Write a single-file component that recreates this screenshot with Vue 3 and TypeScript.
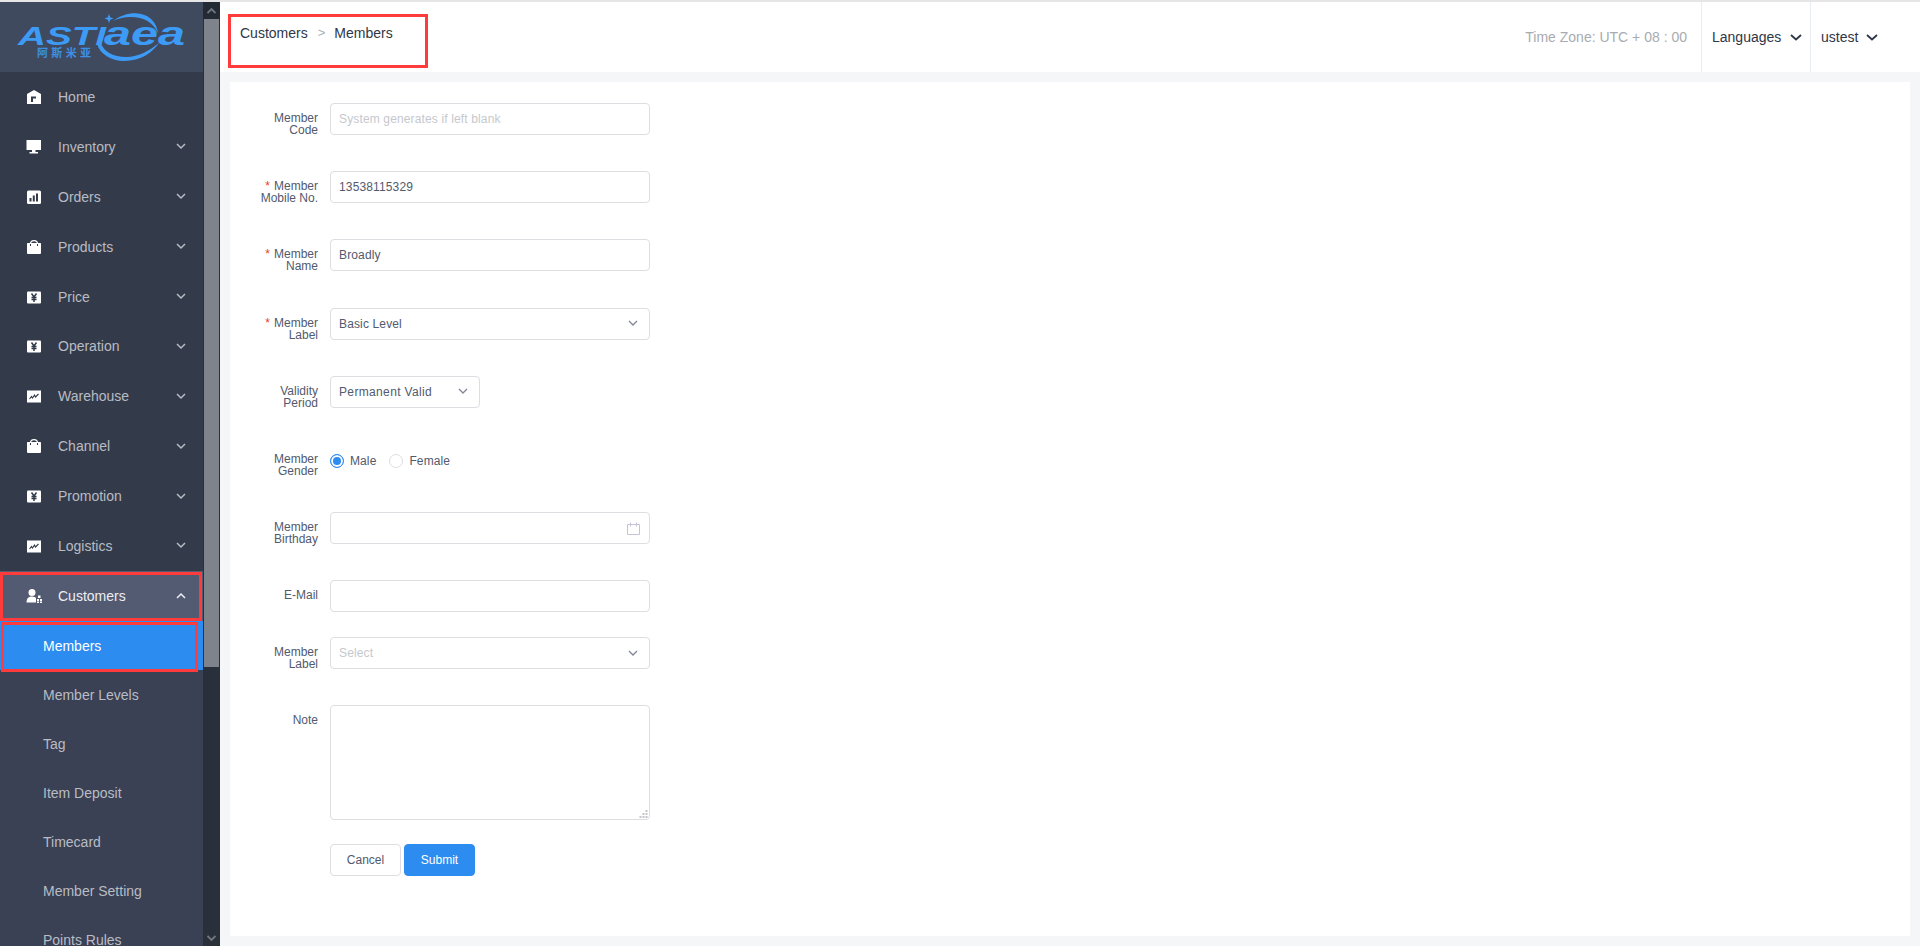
<script setup lang="ts">
import { ref } from 'vue'

type IconName = 'home' | 'monitor' | 'orders' | 'bag' | 'yen' | 'trend'

interface MenuItem {
  label: string
  icon: IconName
  arrow: boolean
}

const menu: MenuItem[] = [
  { label: 'Home', icon: 'home', arrow: false },
  { label: 'Inventory', icon: 'monitor', arrow: true },
  { label: 'Orders', icon: 'orders', arrow: true },
  { label: 'Products', icon: 'bag', arrow: true },
  { label: 'Price', icon: 'yen', arrow: true },
  { label: 'Operation', icon: 'yen', arrow: true },
  { label: 'Warehouse', icon: 'trend', arrow: true },
  { label: 'Channel', icon: 'bag', arrow: true },
  { label: 'Promotion', icon: 'yen', arrow: true },
  { label: 'Logistics', icon: 'trend', arrow: true }
]

const subMenu = ['Members', 'Member Levels', 'Tag', 'Item Deposit', 'Timecard', 'Member Setting', 'Points Rules']

const code = ref('')
const mobile = ref('13538115329')
const name = ref('Broadly')
const birthday = ref('')
const email = ref('')
const note = ref('')
const gender = ref<'male' | 'female'>('male')
</script>

<template>
  <div class="page">
    <div class="topline"></div>
    <div class="shell">
      <aside class="sidebar">
        <div class="nav">
          <div class="logo">
            <svg width="203" height="70" viewBox="0 2 203 70">
              <path class="swoosh" d="M113 21 C122 14 133 12 141 14 C151 16 157 24 158 33 C154 25 148 20 140 18 C131 16 121 17 113 21 Z" />
              <path class="swoosh" d="M97 44 C100 54 111 61 124 61 C141 61 153 52 159 43 C150 50 139 57 126 57 C113 57 105 52 101 44 Z" />
              <path class="swoosh" d="M109 14 L110.200 17.300 L113.500 18.500 L110.200 19.700 L109 23 L107.800 19.700 L104.500 18.500 L107.800 17.300 Z" />
              <text class="logo-en" x="18" y="45" font-size="25" textLength="88" lengthAdjust="spacingAndGlyphs">ASTI</text>
              <text class="logo-en" x="104" y="45" font-size="33" textLength="81" lengthAdjust="spacingAndGlyphs">aea</text>
              <text class="logo-cn" x="37" y="57" font-size="11" textLength="54">阿斯米亚</text>
            </svg>
          </div>

          <div v-for="item in menu" :key="item.label" class="item">
            <svg class="ico" width="16" height="16" viewBox="0 0 16 16">
              <template v-if="item.icon === 'home'">
                <path fill="#fff" fill-rule="evenodd" d="M8 1 L15 5 V15 H1 V5 Z M5 7.500 V13 H7 V9.500 H10 V7.500 Z" />
              </template>
              <template v-else-if="item.icon === 'monitor'">
                <path fill="#fff" d="M.5 1 H15 V11 H.5 Z M6 11 H9.500 V13 H6 Z M3.500 13 H12 V14.500 H3.500 Z" />
              </template>
              <template v-else-if="item.icon === 'orders'">
                <rect x="1" y="1.500" width="14" height="13.500" rx="1.500" fill="#fff" />
                <path fill="#333b4a" d="M3.500 9 H5.500 V12.500 H3.500 Z M6.800 6.500 H8.800 V12.500 H6.800 Z M10 4.500 H12 V12.500 H10 Z" />
              </template>
              <template v-else-if="item.icon === 'bag'">
                <path fill="none" stroke="#fff" stroke-width="1.200" d="M4.500 5 C4.500 .5 11.500 .5 11.500 5" />
                <path fill="#fff" d="M1.500 4 H14.500 Q15 4 15 4.500 V14 Q15 15 14 15 H2 Q1 15 1 14 V4.500 Q1 4 1.500 4 Z" />
                <path fill="#333b4a" d="M4 5 H5 V7 H4 Z M11 5 H12 V7 H11 Z" />
              </template>
              <template v-else-if="item.icon === 'yen'">
                <rect x="1" y="2.500" width="14" height="12" rx="1" fill="#fff" />
                <path fill="none" stroke="#333b4a" stroke-width="1.500" d="M5.500 4.500 L8 8 L10.500 4.500 M5.500 8.500 H10.500 M5.500 10.500 H10.500 M8 8 V13" />
              </template>
              <template v-else>
                <rect x="1" y="2.500" width="14" height="12" fill="#fff" />
                <path fill="none" stroke="#333b4a" stroke-width="1.100" d="M3.500 11 L5.500 8.500 L6.500 10 L8.500 7 L9.500 9 L12.500 6" />
              </template>
            </svg>
            <span class="item-text">{{ item.label }}</span>
            <svg v-if="item.arrow" class="chev" width="10" height="7" viewBox="0 0 10 7">
              <path d="M1 1 L5 5 L9 1" />
            </svg>
          </div>

          <div class="item open">
            <svg class="ico" width="16" height="16" viewBox="0 0 16 16">
              <circle cx="6" cy="4.500" r="3.500" fill="#fff" />
              <path fill="#fff" d="M.5 14.500 C.5 10 3 8.500 6 8.500 C8 8.500 9.500 9.500 10 10 V14.500 Z" />
              <path fill="#fff" d="M12 7.500 H14.500 V10 H12 Z M11 11 H13 V13 H11 Z M14 11 H16 V13 H14 Z M11 13.500 H13 V15 H11 Z M14 13.500 H16 V15 H14 Z" />
            </svg>
            <span class="item-text">Customers</span>
            <svg class="chev" width="10" height="7" viewBox="0 0 10 7">
              <path d="M1 6 L5 2 L9 6" />
            </svg>
          </div>

          <div class="sub">
            <div
              v-for="(s, i) in subMenu"
              :key="s"
              class="sub-item"
              :class="{ active: i === 0 }"
            >{{ s }}</div>
          </div>
        </div>

        <div class="scrollbar">
          <div class="sb-btn sb-up">
            <svg width="9" height="6" viewBox="0 0 9 6"><path d="M.5 5 L4.500 1 L8.500 5" /></svg>
          </div>
          <div class="sb-track"><div class="sb-thumb"></div></div>
          <div class="sb-btn">
            <svg width="9" height="6" viewBox="0 0 9 6"><path d="M.5 1 L4.500 5 L8.500 1" /></svg>
          </div>
        </div>

        <div class="mark mark-customers"></div>
        <div class="mark mark-members"></div>
      </aside>

      <main class="main">
        <header class="header">
          <div class="crumbs">
            <span>Customers</span>
            <span class="crumb-sep">&gt;</span>
            <span>Members</span>
          </div>
          <div class="tz">Time Zone: UTC + 08 : 00</div>
          <div class="head-menu lang">
            <span>Languages</span>
            <svg width="12" height="7" viewBox="0 0 12 7"><path d="M1 1 L6 5.500 L11 1" /></svg>
          </div>
          <div class="head-menu user">
            <span>ustest</span>
            <svg width="12" height="7" viewBox="0 0 12 7"><path d="M1 1 L6 5.500 L11 1" /></svg>
          </div>
          <div class="mark mark-crumbs"></div>
        </header>

        <section class="body">
          <form class="card" @submit.prevent>
            <div class="row">
              <label class="lbl">Member<br />Code</label>
              <input v-model="code" class="field" placeholder="System generates if left blank" />
            </div>
            <div class="row">
              <label class="lbl"><i class="req">*</i>Member<br />Mobile No.</label>
              <input v-model="mobile" class="field" />
            </div>
            <div class="row">
              <label class="lbl"><i class="req">*</i>Member<br />Name</label>
              <input v-model="name" class="field" />
            </div>
            <div class="row">
              <label class="lbl"><i class="req">*</i>Member<br />Label</label>
              <div class="field select">
                <span>Basic Level</span>
                <svg width="10" height="7" viewBox="0 0 10 7"><path d="M1 1 L5 5 L9 1" /></svg>
              </div>
            </div>
            <div class="row">
              <label class="lbl">Validity<br />Period</label>
              <div class="field select narrow">
                <span>Permanent Valid</span>
                <svg width="10" height="7" viewBox="0 0 10 7"><path d="M1 1 L5 5 L9 1" /></svg>
              </div>
            </div>
            <div class="row">
              <label class="lbl">Member<br />Gender</label>
              <div class="radios">
                <span class="radio" @click="gender = 'male'">
                  <span class="dot" :class="{ on: gender === 'male' }"></span>Male
                </span>
                <span class="radio" @click="gender = 'female'">
                  <span class="dot" :class="{ on: gender === 'female' }"></span>Female
                </span>
              </div>
            </div>
            <div class="row">
              <label class="lbl">Member<br />Birthday</label>
              <div class="date">
                <input v-model="birthday" class="field" />
                <svg class="cal" width="13" height="13" viewBox="0 0 13 13">
                  <path d="M.5 2.500 H12.500 V12.500 H.5 Z M3.500 .5 V4.500 M9.500 .5 V4.500" />
                </svg>
              </div>
            </div>
            <div class="row tight">
              <label class="lbl">E-Mail</label>
              <input v-model="email" class="field" />
            </div>
            <div class="row label-row">
              <label class="lbl">Member<br />Label</label>
              <div class="field select">
                <span class="ph">Select</span>
                <svg width="10" height="7" viewBox="0 0 10 7"><path d="M1 1 L5 5 L9 1" /></svg>
              </div>
            </div>
            <div class="row note-row">
              <label class="lbl">Note</label>
              <div class="area-wrap">
                <textarea v-model="note" class="field area"></textarea>
                <svg class="grip" width="9" height="9" viewBox="0 0 9 9">
                  <path d="M6.500 0 H8.500 V2 H6.500 Z M3.500 3 H5.500 V5 H3.500 Z M6.500 3 H8.500 V5 H6.500 Z M.5 6 H2.500 V8 H.5 Z M3.500 6 H5.500 V8 H3.500 Z M6.500 6 H8.500 V8 H6.500 Z" />
                </svg>
              </div>
            </div>
            <div class="row actions">
              <button type="button" class="btn">Cancel</button>
              <button type="submit" class="btn primary">Submit</button>
            </div>
          </form>
        </section>
      </main>
    </div>
  </div>
</template>

<style>
html, body { margin: 0; background: #fff; overflow: hidden; }
</style>

<style scoped>
* { box-sizing: border-box; }
.page {
  height: 946px;
  display: flex;
  flex-direction: column;
  overflow: hidden;
  font-family: "Liberation Sans", Arial, sans-serif;
  color: #515a6e;
}
.topline { height: 2px; background: #e6e6e6; flex: none; }
.shell { flex: 1; min-height: 0; display: flex; }

.sidebar { width: 220px; flex: none; display: flex; position: relative; background: #333b4a; }
.nav { width: 203px; flex: none; overflow: hidden; }
.logo { height: 70px; background: #3f4a5e; }
.logo svg { display: block; }
.swoosh { fill: #3d9af5; }
.logo-en { fill: #3d9af5; font-family: "Liberation Sans", sans-serif; font-weight: 700; font-style: italic; }
.logo-cn { fill: #3d8fe6; font-family: "Noto Sans CJK SC", sans-serif; font-weight: 700; }

.item {
  height: 49.9px;
  padding: 0 17px 0 26px;
  display: flex;
  align-items: center;
  font-size: 14px;
  color: #b9bcc4;
}
.ico { flex: none; margin-right: 16px; }
.item-text { flex: 1; }
.chev { flex: none; }
.chev path { fill: none; stroke: #b9bcc4; stroke-width: 1.500; }
.item.open { background: #535b72; color: #eceef2; }
.item.open .chev path { stroke: #eceef2; }

.sub { background: #3a4154; }
.sub-item {
  height: 49px;
  padding: 2px 0 0 43px;
  display: flex;
  align-items: center;
  font-size: 14px;
  color: #b9bcc4;
}
.sub-item.active { background: #2d8cf0; color: #fff; }

.scrollbar { width: 17px; flex: none; display: flex; flex-direction: column; background: #2a303b; }
.sb-btn { height: 17px; flex: none; display: flex; align-items: center; justify-content: center; background: #2a303a; }
.sb-btn svg path { fill: none; stroke: #72767e; stroke-width: 1.800; }
.sb-up { background: #242a34; }
.sb-track { flex: 1; min-height: 0; padding-left: 1px; padding-right: 1px; }
.sb-thumb { height: 648px; background: #7f838b; }

.mark { position: absolute; border: 3px solid #ff3b3b; pointer-events: none; }
.mark-customers { left: 0; top: 570px; width: 202px; height: 49px; }
.mark-members { left: 1px; top: 620px; width: 197px; height: 50px; }
.mark-crumbs { left: 8px; top: 12px; width: 200px; height: 54px; }

.main { flex: 1; min-width: 0; display: flex; flex-direction: column; background: #f5f6f8; }
.header { height: 70px; flex: none; display: flex; position: relative; background: #fff; font-size: 14px; }
.crumbs { flex: 1; padding: 24px 0 0 20px; color: #2f3648; line-height: 14px; display: flex; align-items: flex-start; }
.crumb-sep { color: #a9adb6; margin: 0 9px 0 10px; font-size: 13px; }
.tz { display: flex; align-items: center; padding-right: 14px; color: #a9abb0; }
.head-menu {
  display: flex;
  align-items: center;
  border-left: 1px solid #e8ecf3;
  color: #2f3648;
}
.head-menu svg path { fill: none; stroke: #2f3648; stroke-width: 1.800; }
.lang { width: 109px; padding-left: 10px; gap: 9px; }
.user { width: 110px; padding-left: 10px; gap: 8px; }

.body { flex: 1; min-height: 0; padding: 10px 10px 10px; }
.card { height: 100%; background: #fff; padding-top: 21px; font-size: 12px; letter-spacing: .12px; }

.row { display: flex; align-items: flex-start; margin-bottom: 36.2px; min-height: 32px; }
.row.tight { margin-bottom: 25px; }
.row.label-row { margin-bottom: 35.2px; }
.row.note-row { margin-bottom: 24px; }
.lbl {
  width: 88px;
  height: 32px;
  flex: none;
  margin-right: 12px;
  padding-top: 9px;
  line-height: 12px;
  font-size: 12px;
  letter-spacing: 0;
  text-align: right;
  color: #515a6e;
}
.req { font-style: normal; color: #ed4014; margin-right: 4px; }

.field {
  width: 320px;
  height: 32px;
  border: 1px solid #dcdee2;
  border-radius: 4px;
  padding: 0 8px;
  background: #fff;
  color: #515a6e;
  font: 12px "Liberation Sans", Arial, sans-serif;
  letter-spacing: .14px;
  outline: none;
}
.field::placeholder { color: #c5c8ce; }
.select { display: flex; align-items: center; justify-content: space-between; padding-right: 11px; }
.select svg path { fill: none; stroke: #808695; stroke-width: 1.300; }
.select.narrow { width: 150px; letter-spacing: .35px; }
.ph { color: #c5c8ce; }

.date { position: relative; width: 320px; height: 32px; }
.cal { position: absolute; right: 10px; top: 10px; }
.cal path { fill: none; stroke: #c4c4d6; stroke-width: 1; }

.radios { display: flex; height: 32px; align-items: center; padding-top: 2px; letter-spacing: .1px; }
.radio { display: flex; align-items: center; margin-right: 13px; cursor: pointer; }
.dot {
  width: 14px;
  height: 14px;
  border: 1px solid #dcdee2;
  border-radius: 50%;
  margin-right: 6px;
  background: #fff;
}
.dot.on { border-color: #2d8cf0; box-shadow: inset 0 0 0 2px #fff; background: #2d8cf0; }

.area-wrap { position: relative; width: 320px; height: 115px; }
.area { display: block; height: 115px; padding: 5px 8px; resize: none; }
.grip { position: absolute; right: 2px; bottom: 1px; pointer-events: none; }
.grip path { fill: #c4c6ca; }

.actions { padding-left: 100px; gap: 3px; margin-bottom: 0; }
.btn {
  width: 71px;
  height: 32px;
  border: 1px solid #dcdee2;
  border-radius: 4px;
  background: #fff;
  color: #515a6e;
  font: 12px "Liberation Sans", Arial, sans-serif;
}
.btn.primary { background: #2d8cf0; border-color: #2d8cf0; color: #fff; }
</style>
